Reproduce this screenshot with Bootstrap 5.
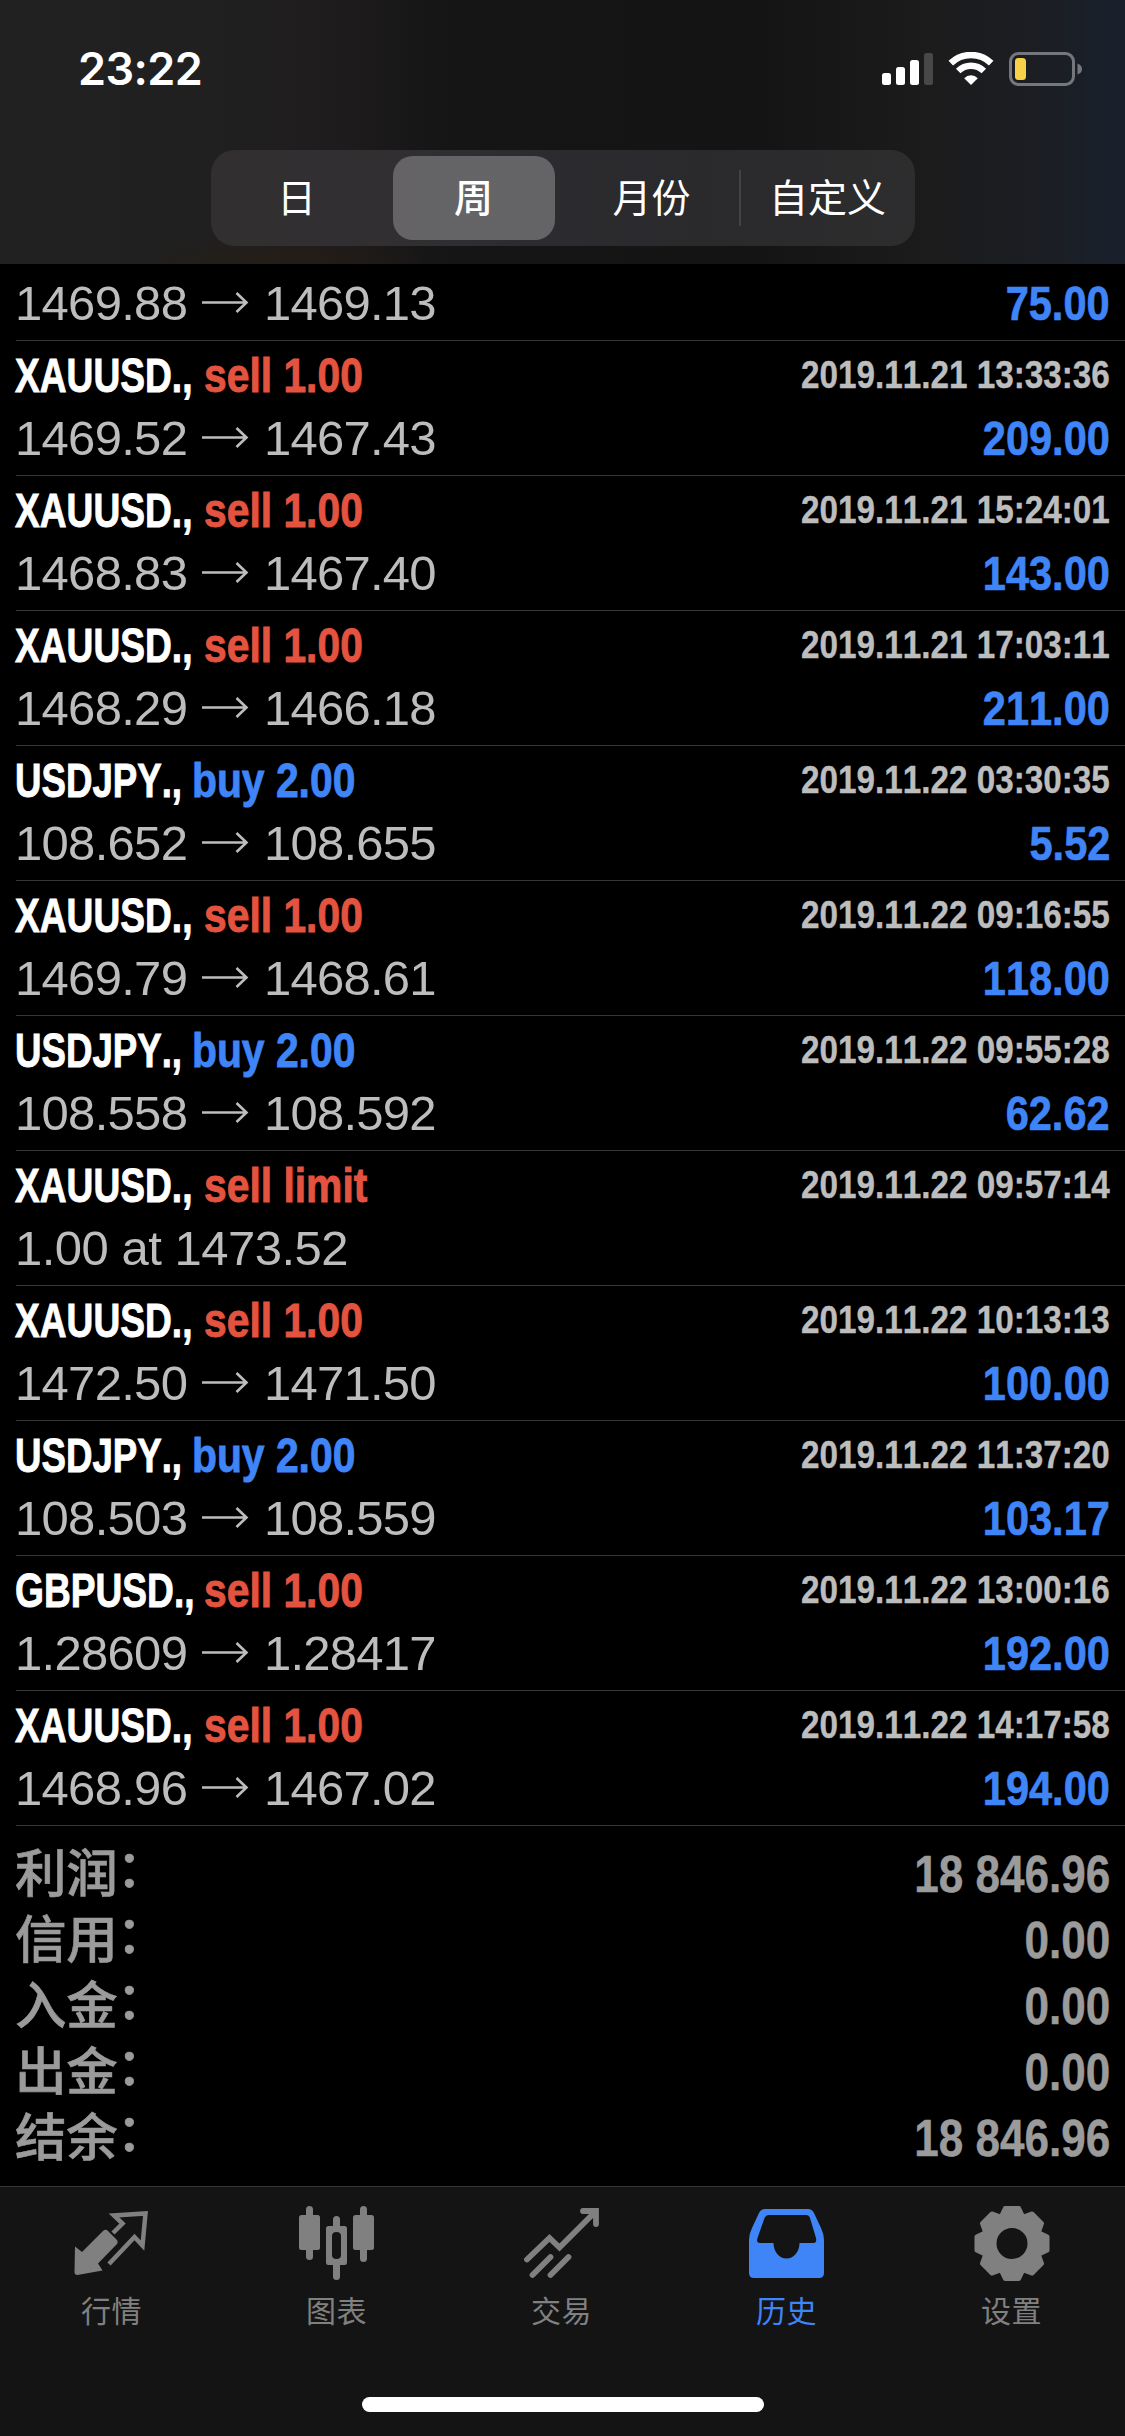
<!DOCTYPE html>
<html lang="zh-CN">
<head>
<meta charset="utf-8">
<meta name="viewport" content="width=device-width, initial-scale=1">
<title>历史</title>
<link href="https://cdn.jsdelivr.net/npm/bootstrap@5.3.0/dist/css/bootstrap.min.css" rel="stylesheet">
<style>
html, body { height: 100%; background: #000; }
body { font-family: "Liberation Sans", "Noto Sans CJK SC", sans-serif; font-kerning: none; overflow: hidden; }
.screen { width: 1125px; height: 2436px; }
.topbar {
  height: 264px;
  background:
    radial-gradient(ellipse 150px 30px at 280px 264px, rgba(42,28,12,.5), transparent),
    linear-gradient(90deg, #212121 0, #202020 210px, #1f1c1d 330px, #151515 450px, #141414 760px, #1c1c1d 940px, #1b1e25 1060px, #18202c 1125px);
}
.statusbar { height: 150px; padding: 52px 43px 0 78px; }
.clock { font: 600 45px/34px Inter, sans-serif; letter-spacing: -.6px; }
.status-icons { gap: 15px; }
.segments { width: 704px; height: 96px; border-radius: 24px; padding: 6px;
  background: linear-gradient(90deg, #312f30, #322f32 25%, #2c2c30 45%, #2a2a2d 70%, #2d2d2e); }
.seg { font: 400 39px/78px "Noto Sans CJK SC", sans-serif; height: 84px; flex: none; color: #fff; }
.seg.first { width: 173px; padding-right: 13px; }
.seg.picked { width: 162px; margin: 0 3px; border-radius: 20px; background: linear-gradient(90deg, #656365, #646467); font-weight: 500; }
.seg.month { width: 183px; border-right: 2px solid #434346; height: 56px; line-height: 50px; padding-left: 7px; }
.seg.custom { width: 167px; padding-left: 7px; }
.deals { min-height: 0; }
.deal { height: 135px; flex: none; margin-left: 16px; padding-right: 15px; border-bottom: 1px solid #373737; }
.deal.partial { height: 77px; padding-top: 11px; }
.head-line { height: 69px; line-height: 68px; font-size: 49px; font-weight: 700; }
.price-line { height: 57px; line-height: 57px; font-size: 49px; color: #bdbdbd; }
.symbol { width: 188px; color: #fff; }
.symbol.yen { width: 176px; }
.squeeze { display: inline-block; white-space: nowrap; transform-origin: 0 50%; -webkit-text-stroke: .9px currentColor; }
.symbol .squeeze { transform: scaleX(.758); margin-left: -1px; }
.yen .squeeze { transform: scaleX(.748); }
.act .squeeze { transform: scaleX(.833); }
.sell { color: #e4533f; }
.buy, .gain { color: #3f85f8; }
.stamp { transform-origin: 100% 50%; transform: scaleX(.842); font-size: 39.5px; line-height: 67px; color: #bdbdbd; -webkit-text-stroke-width: .4px; }
.gain { transform-origin: 100% 50%; transform: scaleX(.848); font-weight: 700; -webkit-text-stroke-width: .7px; }
.price { letter-spacing: -.75px; margin-left: -1px; }
.price.from { width: 186px; letter-spacing: -.7px; }
.price.order { letter-spacing: -.5px; }
.arrow { width: 64px; font-family: "Liberation Sans", sans-serif; }
.arrow svg { display: block; margin-top: 13px; }
.totals { height: 360px; padding: 15px; color: #9b9b9b; }
.total-line { height: 66px; font-weight: 700; }
.total-name { font-size: 51.5px; line-height: 66px; font-weight: 500; letter-spacing: -.3px; -webkit-text-stroke: .6px currentColor; }
.total-name i { font-style: normal; margin-left: -1px; line-height: 40px; vertical-align: 5px; }
.total-sum { font-size: 52px; line-height: 66px; transform-origin: 100% 50%; transform: scaleX(.848); -webkit-text-stroke-width: .5px; }
.tabbar { height: 250px; background: #141414; border-top: 1px solid #373737; color: #808080; }
.tab { width: 225px; height: 150px; padding: 16px 2px 0 0; }
.tab svg { display: block; width: 90px; height: 84px; }
.tab span { font: 400 30px/44px "Noto Sans CJK SC", sans-serif; letter-spacing: .5px; }
.tab.on { color: #3f85f8; }
.home { width: 402px; height: 15px; border-radius: 8px; background: #fff; margin-top: 60px; }
</style>
<script src="https://cdn.jsdelivr.net/npm/bootstrap@5.3.0/dist/js/bootstrap.bundle.min.js"></script>
</head>
<body class="m-0">
<div class="screen d-flex flex-column">
  <header class="topbar flex-shrink-0 text-white">
    <div class="statusbar d-flex justify-content-between align-items-start">
      <div class="clock">23:22</div>
      <div class="status-icons d-flex">
        <svg width="51" height="34" fill="#fff"><rect x="0" y="21" width="9" height="12" rx="2.5"/><rect x="14" y="15" width="9" height="18" rx="2.5"/><rect x="28" y="8" width="9" height="25" rx="2.5"/><rect x="42" y="1" width="9" height="32" rx="2.5" fill="#484848"/></svg>
        <svg width="46" height="34" viewBox="0 0 46 34" fill="none" stroke="#fff"><path d="M2.800 11.200A29 29 0 0 1 43.200 11.200" stroke-width="6.500"/><path d="M10.200 19A18.500 18.500 0 0 1 35.800 19" stroke-width="6.500"/><path d="M23 33L16.200 26.200A9.500 9.500 0 0 1 29.800 26.200Z" fill="#fff" stroke="none"/></svg>
        <svg width="73" height="34"><rect x="1.500" y="1.500" width="63" height="31" rx="8" fill="none" stroke="#75777d" stroke-width="3"/><rect x="6" y="6" width="11" height="22" rx="3.500" fill="#f7d148"/><path d="M68.500 11.500Q73 13 73 17T68.500 22.500Z" fill="#75777d"/></svg>
      </div>
    </div>
    <div class="segments d-flex align-items-center mx-auto text-center">
      <div class="seg first">日</div><div class="seg picked">周</div><div class="seg month">月份</div><div class="seg custom">自定义</div>
    </div>
  </header>

  <main class="deals flex-grow-1 d-flex flex-column" id="deals"></main>

  <section class="totals flex-shrink-0" id="totals"></section>

  <nav class="tabbar flex-shrink-0">
    <div class="d-flex text-center">
      <div class="tab d-flex flex-column align-items-center">
        <svg viewBox="67 2203 90 84"><path d="M75 2246.500l7 5.500 21.500-21.500q2-1.500 4 0l9.500 9.500q1.500 2 0 4l-19 19.500 4.500 7-25 4.500q-3 0-3-3z" fill="currentColor"/><path d="M113 2233l9.500-9.500-8.500-8 31.500-2-3 32-8-8.500L109 2264" fill="none" stroke="currentColor" stroke-width="4.500"/></svg>
        <span>行情</span></div>
      <div class="tab d-flex flex-column align-items-center">
        <svg viewBox="292 2203 90 84" fill="currentColor"><rect x="299" y="2215" width="21" height="35" rx="2.500"/><rect x="306" y="2206" width="7" height="54" rx="3.500"/><rect x="353" y="2215" width="21" height="35" rx="2.500"/><rect x="360" y="2206" width="7" height="56" rx="3.500"/><rect x="333" y="2216" width="7" height="14" rx="3.500"/><rect x="333" y="2260" width="7" height="20" rx="3.500"/><path fill-rule="evenodd" d="M328.500 2226h16q2.500 0 2.500 2.500v34q0 2.500-2.500 2.500h-16q-2.500 0-2.500-2.500v-34q0-2.500 2.500-2.500zM336.500 2232q-4.500 0-4.500 4v19q0 4 4.500 4t4.500-4v-19q0-4-4.500-4z"/></svg>
        <span>图表</span></div>
      <div class="tab d-flex flex-column align-items-center">
        <svg viewBox="517 2203 90 84" fill="none" stroke="currentColor" stroke-width="5.800" stroke-linecap="round" stroke-linejoin="round"><path d="M527 2259.500L549.500 2238l10 9.500L595 2212M583 2211h13v13" stroke-linejoin="miter"/><path d="M532.500 2275l18-18M550.500 2275l18-18"/></svg>
        <span>交易</span></div>
      <div class="tab on d-flex flex-column align-items-center">
        <svg viewBox="742 2203 90 84" fill="currentColor"><path fill-rule="evenodd" d="M765 2209h43q4 0 6 4l7 15q3 6 3 12v33q0 5-5 5h-65q-5 0-5-5v-33q0-6 3-12l7-15q2-4 6-4zM769 2215q-3 0-4.500 3l-7 20q-1.500 5 2 5h14a13 15.500 0 0 0 26 0h14q3.500 0 2.500-5l-6-20q-1-3-4-3z"/></svg>
        <span>历史</span></div>
      <div class="tab d-flex flex-column align-items-center">
        <svg viewBox="-45 -40.500 90 84" fill="currentColor" stroke="currentColor" stroke-width="4" stroke-linejoin="round"><circle r="22.500" fill="none" stroke-width="14"/><g id="t"><path id="tooth" d="M-12-25L-7-35.500H7L12-25z"/><use href="#tooth" transform="rotate(90)"/><use href="#tooth" transform="rotate(180)"/><use href="#tooth" transform="rotate(270)"/></g><use href="#t" transform="rotate(45)"/></svg>
        <span>设置</span></div>
    </div>
    <div class="home mx-auto"></div>
  </nav>
</div>
<script>
const deals = [
  ["XAUUSD", "sell 1.00", "2019.11.21 13:33:36", "1469.52", "1467.43", "209.00"],
  ["XAUUSD", "sell 1.00", "2019.11.21 15:24:01", "1468.83", "1467.40", "143.00"],
  ["XAUUSD", "sell 1.00", "2019.11.21 17:03:11", "1468.29", "1466.18", "211.00"],
  ["USDJPY", "buy 2.00", "2019.11.22 03:30:35", "108.652", "108.655", "5.52"],
  ["XAUUSD", "sell 1.00", "2019.11.22 09:16:55", "1469.79", "1468.61", "118.00"],
  ["USDJPY", "buy 2.00", "2019.11.22 09:55:28", "108.558", "108.592", "62.62"],
  ["XAUUSD", "sell limit", "2019.11.22 09:57:14", "1.00 at 1473.52", "", ""],
  ["XAUUSD", "sell 1.00", "2019.11.22 10:13:13", "1472.50", "1471.50", "100.00"],
  ["USDJPY", "buy 2.00", "2019.11.22 11:37:20", "108.503", "108.559", "103.17"],
  ["GBPUSD", "sell 1.00", "2019.11.22 13:00:16", "1.28609", "1.28417", "192.00"],
  ["XAUUSD", "sell 1.00", "2019.11.22 14:17:58", "1468.96", "1467.02", "194.00"]
];
const arrow = `<span class="arrow"><svg width="48" height="30" fill="none" stroke="#bdbdbd" stroke-width="2.600"><path d="M1 14.500H45M35.500 5L45.500 14.500L35.500 24"/></svg></span>`;
const prices = (from, to, gain) => `<div class="price-line d-flex">` + (to
  ? `<span class="price from">${from}</span>${arrow}<span class="price">${to}</span><span class="gain squeeze ms-auto">${gain}</span>`
  : `<span class="price order">${from}</span>`) + `</div>`;
document.getElementById("deals").innerHTML =
  `<div class="deal partial">${prices("1469.88", "1469.13", "75.00")}</div>` +
  deals.map(([sym, act, time, from, to, gain]) => `<div class="deal">
    <div class="head-line d-flex">
      <span class="symbol ${sym === "USDJPY" ? "yen" : ""}"><span class="squeeze">${sym}.,</span></span>
      <span class="act ${act.split(" ")[0]}"><span class="squeeze">${act}</span></span>
      <span class="stamp squeeze ms-auto">${time}</span>
    </div>${prices(from, to, gain)}</div>`).join("");
document.getElementById("totals").innerHTML =
  [["利润", "18 846.96"], ["信用", "0.00"], ["入金", "0.00"], ["出金", "0.00"], ["结余", "18 846.96"]]
  .map(([n, v]) => `<div class="total-line d-flex justify-content-between"><span class="total-name">${n}<i>：</i></span><span class="total-sum squeeze">${v}</span></div>`).join("");
</script>
</body>
</html>
